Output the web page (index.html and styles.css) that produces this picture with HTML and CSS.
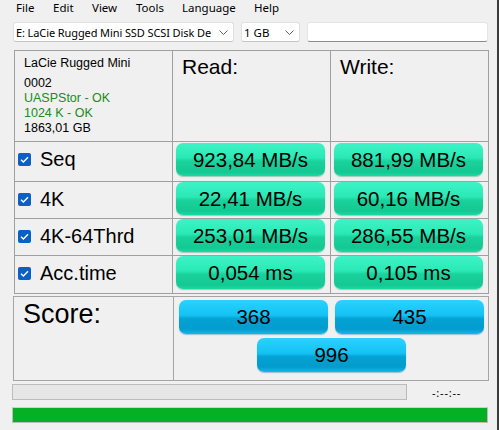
FILE: index.html
```html
<!DOCTYPE html>
<html>
<head>
<meta charset="utf-8">
<link rel="stylesheet" href="styles.css">
</head>
<body>
<div class="window">
  <div class="menu">
    <span>File</span><span>Edit</span><span>View</span><span>Tools</span><span>Language</span><span>Help</span>
  </div>
  <div class="toolbar">
    <div class="combo combo-drive">
      <span class="combo-text">E: LaCie Rugged Mini SSD SCSI Disk De</span>
      <svg class="chev" width="9" height="5" viewBox="0 0 9 5"><path d="M0.5 0.5 L4.5 4.5 L8.5 0.5" fill="none" stroke="#606060" stroke-width="1"/></svg>
    </div>
    <div class="combo combo-size">
      <span class="combo-text">1 GB</span>
      <svg class="chev" width="9" height="5" viewBox="0 0 9 5"><path d="M0.5 0.5 L4.5 4.5 L8.5 0.5" fill="none" stroke="#606060" stroke-width="1"/></svg>
    </div>
    <div class="field"></div>
  </div>

  <div class="table">
    <div class="cell info">
      <div class="drive-name">LaCie Rugged Mini</div>
      <div>0002</div>
      <div class="ok">UASPStor - OK</div>
      <div class="ok">1024 K - OK</div>
      <div>1863,01 GB</div>
    </div>
    <div class="cell head">Read:</div>
    <div class="cell head">Write:</div>

    <div class="cell label r1"><span class="check"><svg width="13" height="13" viewBox="0 0 13 13"><path d="M3 6.8 L5.4 9 L10 4.2" fill="none" stroke="#fff" stroke-width="1.4"/></svg></span>Seq</div>
    <div class="cell val r1"><div class="btn green">923,84 MB/s</div></div>
    <div class="cell val r1"><div class="btn green">881,99 MB/s</div></div>

    <div class="cell label"><span class="check"><svg width="13" height="13" viewBox="0 0 13 13"><path d="M3 6.8 L5.4 9 L10 4.2" fill="none" stroke="#fff" stroke-width="1.4"/></svg></span>4K</div>
    <div class="cell val"><div class="btn green">22,41 MB/s</div></div>
    <div class="cell val"><div class="btn green">60,16 MB/s</div></div>

    <div class="cell label"><span class="check"><svg width="13" height="13" viewBox="0 0 13 13"><path d="M3 6.8 L5.4 9 L10 4.2" fill="none" stroke="#fff" stroke-width="1.4"/></svg></span>4K-64Thrd</div>
    <div class="cell val"><div class="btn green">253,01 MB/s</div></div>
    <div class="cell val"><div class="btn green">286,55 MB/s</div></div>

    <div class="cell label"><span class="check"><svg width="13" height="13" viewBox="0 0 13 13"><path d="M3 6.8 L5.4 9 L10 4.2" fill="none" stroke="#fff" stroke-width="1.4"/></svg></span>Acc.time</div>
    <div class="cell val"><div class="btn green">0,054 ms</div></div>
    <div class="cell val"><div class="btn green">0,105 ms</div></div>
  </div>

  <div class="score">
    <div class="score-label">Score:</div>
    <div class="score-vals">
      <div class="btn blue">368</div>
      <div class="btn blue">435</div>
      <div class="btn blue total">996</div>
    </div>
  </div>

  <div class="progress-row">
    <div class="progress"></div>
    <span class="time">-:--:--</span>
  </div>
  <div class="done"></div>
</div>
</body>
</html>
```

FILE: styles.css
```css
html, body {
  margin: 0;
  padding: 0;
}
body {
  background: #f0f0f0;
}
.window {
  width: 499px;
  height: 430px;
  overflow: hidden;
  background: #f0f0f0;
  box-shadow: inset -2px 0 0 #3c3c3c;
  font-family: "Liberation Sans", Arial, sans-serif;
  color: #000;
}
.menu {
  display: grid;
  grid-template-columns: 37px 39px 44px 46px 72px auto;
  padding-left: 16px;
  height: 18px;
  font-family: "Noto Sans", sans-serif;
  font-size: 11.5px;
  line-height: 15px;
}
.toolbar {
  display: flex;
  gap: 7px;
  margin: 4px 0 0 13px;
  height: 20px;
}
.combo {
  box-sizing: border-box;
  height: 20px;
  background: #fff;
  border: 1px solid #e0e0e0;
  border-bottom-color: #c4c4c4;
  border-radius: 3px;
  display: flex;
  align-items: center;
  position: relative;
  font-family: "Noto Sans", sans-serif;
  font-size: 11.5px;
}
.combo-drive { width: 221px; }
.combo-size { width: 59px; }
.combo-drive .combo-text {
  font-size: 11px;
  letter-spacing: -0.1px;
}
.combo-text {
  white-space: nowrap;
  padding-left: 2px;
}
.chev {
  position: absolute;
  right: 5px;
  top: 7px;
}
.field {
  box-sizing: border-box;
  width: 181px;
  height: 20px;
  background: #fff;
  border: 1px solid #e4e4e4;
  border-bottom: 1px solid #8c8c8c;
  border-radius: 3px;
}
.table {
  margin: 8px 0 0 14px;
  width: 475px;
  box-sizing: border-box;
  display: grid;
  grid-template-columns: 158px 158px 158px;
  grid-template-rows: 91px 40px 37px 37px 38px;
  border-top: 1px solid #a0a0a0;
  border-left: 1px solid #a0a0a0;
}
.cell {
  box-sizing: border-box;
  border-right: 1px solid #a0a0a0;
  border-bottom: 1px solid #a0a0a0;
}
.info {
  padding: 5px 0 0 9px;
  font-size: 12.5px;
  line-height: 15px;
}
.drive-name {
  margin-bottom: 5px;
}
.ok {
  color: #218a21;
}
.head {
  font-size: 21px;
  padding: 4px 0 0 9px;
  line-height: 24px;
}
.label {
  display: flex;
  align-items: center;
  font-size: 20px;
  padding-left: 3px;
  padding-bottom: 2px;
}
.label.r1 {
  padding-bottom: 4px;
}
.check {
  width: 13px;
  height: 13px;
  background: #0a60c4;
  border-radius: 2px;
  margin-right: 9px;
  display: flex;
}
.val {
  padding: 0 4px 0 3px;
}
.val.r1 {
  padding-top: 1px;
}
.btn {
  box-sizing: border-box;
  width: 149px;
  height: 33px;
  border-radius: 7px;
  display: flex;
  align-items: center;
  justify-content: center;
  font-size: 20.5px;
  color: #000;
}
.green {
  background: linear-gradient(to bottom, #3ef3c6 0%, #2ae9b5 45%, #1ad29d 55%, #14c892 88%, #1bd9a3 100%);
  box-shadow: 0 1px 1px rgba(0, 130, 90, 0.35);
}
.blue {
  background: linear-gradient(to bottom, #2ad2ff 0%, #14c2f3 45%, #04a2d4 55%, #029ccd 85%, #15b7ea 100%);
  box-shadow: 0 1px 1px rgba(0, 100, 160, 0.35);
}
.score {
  margin: 2px 0 0 13px;
  width: 476px;
  height: 85px;
  box-sizing: border-box;
  border: 1px solid #a5a5a5;
  display: grid;
  grid-template-columns: 160px 1fr;
}
.score-label {
  border-right: 1px solid #a5a5a5;
  font-size: 27px;
  padding: 2px 0 0 9px;
  line-height: 30px;
}
.score-vals {
  display: grid;
  grid-template-columns: 149px 149px;
  grid-template-rows: 34px 34px;
  column-gap: 7px;
  row-gap: 4px;
  padding: 3px 0 0 5px;
}
.score-vals .btn {
  height: 34px;
}
.total {
  grid-column: 1 / 3;
  justify-self: center;
}
.progress-row {
  display: flex;
  align-items: center;
  margin: 3px 0 0 12px;
  height: 16px;
}
.progress {
  box-sizing: border-box;
  width: 395px;
  height: 16px;
  background: #e6e6e6;
  border: 1px solid #bcbcbc;
}
.time {
  margin-left: 25px;
  font-family: "Noto Sans", sans-serif;
  font-size: 11px;
  letter-spacing: 0.8px;
}
.done {
  margin: 7px 0 0 12px;
  width: 476px;
  height: 16px;
  box-sizing: border-box;
  background: #06b025;
  border: 1px solid #bcbcbc;
  border-top-color: #d0d0d0;
}
```
